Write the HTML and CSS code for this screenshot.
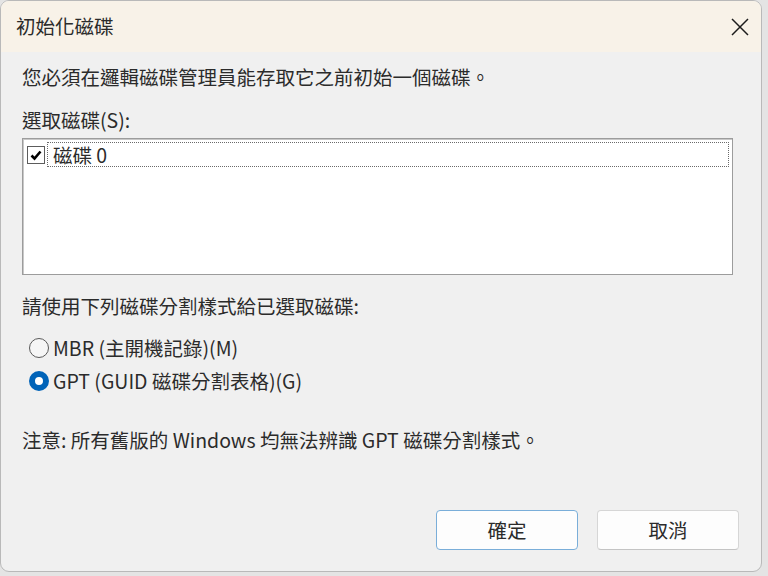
FILE: index.html
```html
<!DOCTYPE html>
<html lang="zh-Hant">
<head>
  <meta charset="UTF-8" />
  <title>初始化磁碟</title>
  <link rel="stylesheet" href="styles.css">
</head>
<body>
  <div class="dialog">
    <div class="titlebar">
      <span class="title">初始化磁碟</span>
      <span class="close" aria-label="關閉">
        <svg width="18" height="18" viewBox="0 0 18 18"><path d="M1 1L17 17M17 1L1 17" stroke="#1c1c1c" stroke-width="1.5" fill="none"/></svg>
      </span>
    </div>
    <div class="content">
      <p class="intro">您必須在邏輯磁碟管理員能存取它之前初始一個磁碟。</p>
      <p class="label">選取磁碟(S):</p>
      <div class="listbox">
        <div class="list-item">
          <span class="checkbox">
            <svg width="12" height="12" viewBox="0 0 12 12"><path d="M1.5 6.5L4.5 9.5L10.5 2.5" stroke="#000" stroke-width="2.6" fill="none"/></svg>
          </span>
          <span class="item-text">磁碟 0</span>
        </div>
      </div>
      <p class="label section">請使用下列磁碟分割樣式給已選取磁碟:</p>
      <div class="radios">
        <label class="radio"><span class="dot"></span>MBR (主開機記錄)(M)</label>
        <label class="radio checked"><span class="dot"></span>GPT (GUID 磁碟分割表格)(G)</label>
      </div>
      <p class="note">注意: 所有舊版的 Windows 均無法辨識 GPT 磁碟分割樣式。</p>
      <div class="buttons">
        <button class="btn default">確定</button>
        <button class="btn">取消</button>
      </div>
    </div>
  </div>
</body>
</html>
```

FILE: styles.css
```css
body {
  margin: 0;
  background: #e4e4e4;
  font-family: "Noto Sans CJK TC", "Noto Sans", sans-serif;
  color: #2b2b2b;
}
p {
  margin: 0;
}
.dialog {
  width: 762px;
  height: 572px;
  box-sizing: border-box;
  border: 1px solid #b9b9b9;
  border-radius: 9px;
  background: #f0f0f0;
  overflow: hidden;
  display: flex;
  flex-direction: column;
}
.titlebar {
  height: 51px;
  flex: none;
  background: #f8f2e8;
  display: flex;
  align-items: center;
  justify-content: space-between;
  padding: 0 12px 0 15px;
}
.title {
  font-size: 19.5px;
  line-height: 24px;
  margin-top: -2px;
}
.close {
  display: flex;
  margin-top: 1px;
}
.content {
  flex: 1;
  display: flex;
  flex-direction: column;
  padding: 13px 28px 21px 21px;
  font-size: 19.5px;
  line-height: 24px;
}
.intro {
  margin-bottom: 19px;
}
.label {
  margin-bottom: 6px;
}
.listbox {
  height: 137px;
  box-sizing: border-box;
  border: 1px solid #9c9c9c;
  box-shadow: inset 1px 1px 0 #c8c8c8;
  background: #fff;
  padding: 3px 3px 0 4px;
}
.list-item {
  display: flex;
  align-items: center;
  gap: 2px;
}
.checkbox {
  width: 16px;
  height: 16px;
  border: 1px solid #5c5c5c;
  background: #fff;
  display: flex;
  align-items: center;
  justify-content: center;
}
.item-text {
  flex: 1;
  height: 25px;
  box-sizing: border-box;
  border: 1px dotted #6a6a6a;
  padding-left: 5px;
  line-height: 23px;
}
.section {
  margin-top: 19px;
  margin-bottom: 17px;
}
.radios {
  display: flex;
  flex-direction: column;
  gap: 7px;
  padding-left: 7px;
}
.radio {
  display: flex;
  align-items: center;
  gap: 4px;
  height: 26px;
}
.dot {
  width: 20px;
  height: 20px;
  box-sizing: border-box;
  border-radius: 50%;
  border: 1px solid #5a5a5a;
  background: #f6f6f6;
}
.radio.checked .dot {
  border: 6px solid #0063b8;
  background: #fff;
}
.note {
  margin-top: 34px;
}
.buttons {
  margin-top: auto;
  display: flex;
  justify-content: flex-end;
  gap: 19px;
  margin-right: -6px;
}
.btn {
  width: 142px;
  height: 40px;
  font: inherit;
  color: #2b2b2b;
  background: #fdfdfd;
  border: 1px solid #d6d6d6;
  border-bottom-color: #c4c4c4;
  border-radius: 4px;
}
.btn.default {
  border-color: #7aaed9;
}
```
